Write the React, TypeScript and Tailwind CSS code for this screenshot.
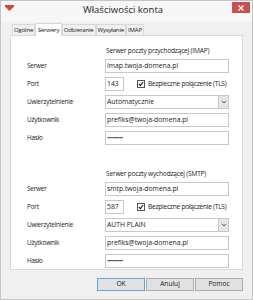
import React from "react";

const font = { fontFamily: '"Open Sans", "Noto Sans", sans-serif' };

function TextBox({ value, width = "w-[124px]" }: { value: string; width?: string }) {
  return (
    <div
      className={`${width} h-[14px] border border-[#c8c8c8] bg-white flex items-center px-[1px] text-[6.8px] leading-none text-[#1a1a1a] whitespace-nowrap`}
    >
      {value}
    </div>
  );
}

function Password() {
  return (
    <div className="w-[124px] h-[14px] border border-[#c8c8c8] bg-white flex items-center px-[1px] overflow-hidden">
      <span className="text-[6px] leading-none tracking-[-0.7px] text-[#222]">••••••••••</span>
    </div>
  );
}

function Select({ value }: { value: string }) {
  return (
    <div className="w-[124px] h-[14px] border border-[#c8c8c8] bg-white flex items-stretch text-[6.8px] leading-none text-[#1a1a1a]">
      <div className="flex-1 flex items-center px-[1px]">{value}</div>
      <div className="w-[10px] bg-[#e6e6e6] border-l border-[#c8c8c8] flex items-center justify-center">
        <svg width="6" height="4" viewBox="0 0 6 4">
          <path d="M0.8 0.8 L3 3 L5.2 0.8" fill="none" stroke="#555" strokeWidth="1" />
        </svg>
      </div>
    </div>
  );
}

function Row({ label, children }: { label: string; children: React.ReactNode }) {
  return (
    <div className="grid grid-cols-[78px_124px] items-center h-[14px]">
      <span className="text-[6.4px] tracking-[-0.2px] leading-none text-[#1a1a1a] whitespace-nowrap">{label}</span>
      {children}
    </div>
  );
}

function PortRow({ port }: { port: string }) {
  return (
    <Row label="Port">
      <div className="flex items-center">
        <TextBox value={port} width="w-[19px]" />
        <div className="ml-[13px] w-[8px] h-[8px] border border-[#555] bg-white flex items-center justify-center">
          <svg width="6" height="6" viewBox="0 0 6 6">
            <path d="M0.8 3 L2.4 4.6 L5.2 1" fill="none" stroke="#222" strokeWidth="1.1" />
          </svg>
        </div>
        <span className="ml-[3px] text-[6.6px] tracking-[-0.25px] leading-none text-[#1a1a1a] whitespace-nowrap">
          Bezpieczne połączenie (TLS)
        </span>
      </div>
    </Row>
  );
}

function Section({
  title,
  server,
  port,
  auth,
}: {
  title: string;
  server: string;
  port: string;
  auth: string;
}) {
  return (
    <div className="flex flex-col">
      <div className="h-[12px] pl-[79px] text-[6.6px] tracking-[-0.2px] leading-[12px] text-[#1a1a1a] whitespace-nowrap">
        {title}
      </div>
      <div className="flex flex-col gap-[4px] mt-[2px]">
        <Row label="Serwer">
          <TextBox value={server} />
        </Row>
        <PortRow port={port} />
        <Row label="Uwierzytelnienie">
          <Select value={auth} />
        </Row>
        <Row label="Użytkownik">
          <TextBox value="prefiks@twoja-domena.pl" />
        </Row>
        <Row label="Hasło">
          <Password />
        </Row>
      </div>
    </div>
  );
}

export default function App() {
  const tabs = ["Ogólne", "Serwery", "Odbieranie", "Wysyłanie", "IMAP"];

  return (
    <div style={font} className="w-[253px] h-[300px] bg-[#f0f0f0] border border-[#c4c4c4] flex flex-col overflow-hidden">
      {/* title bar */}
      <div className="h-[21px] bg-[#f7f7f7] flex items-start">
        <div className="pl-[4px] pt-[4px]">
          <svg width="9" height="6" viewBox="0 0 9 6">
            <path d="M0 0 H9 V1.5 L4.5 6 L0 1.5 Z" fill="#d9413b" />
          </svg>
        </div>
        <div className="flex-1 text-center text-[9.5px] leading-[17px] text-[#222]">Właściwości konta</div>
        <div className="mr-[2px] mt-[1px] w-[18px] h-[11px] bg-[#c75050] flex items-center justify-center">
          <svg width="6" height="6" viewBox="0 0 6 6">
            <path d="M0.5 0.5 L5.5 5.5 M5.5 0.5 L0.5 5.5" stroke="#fff" strokeWidth="1.2" />
          </svg>
        </div>
      </div>

      {/* tabs */}
      <div className="ml-[10px] mr-[9px] mt-[1px] flex items-end h-[12px] relative z-10">
        <div className="ml-[1px] flex items-end">
          {tabs.map((t) => {
            const active = t === "Serwery";
            return (
              <div
                key={t}
                className={
                  active
                    ? "h-[13px] -mb-[1px] px-[1.5px] bg-white border border-b-0 border-[#d9d9d9] text-[6.1px] tracking-[-0.2px] leading-[12px] text-[#1a1a1a] whitespace-nowrap"
                    : "h-[11px] px-[1px] bg-[#f0f0f0] border border-b-0 border-[#d9d9d9] text-[6.1px] tracking-[-0.2px] leading-[10px] text-[#1a1a1a] whitespace-nowrap"
                }
              >
                {t}
              </div>
            );
          })}
        </div>
      </div>

      {/* panel */}
      <div className="ml-[9px] mr-[9px] h-[235px] bg-white border border-[#d9d9d9] pl-[16px] pt-[9px] flex flex-col">
        <Section
          title="Serwer poczty przychodzącej (IMAP)"
          server="imap.twoja-domena.pl"
          port="143"
          auth="Automatycznie"
        />
        <div className="h-[23px]" />
        <Section
          title="Serwer poczty wychodzącej (SMTP)"
          server="smtp.twoja-domena.pl"
          port="587"
          auth="AUTH PLAIN"
        />
      </div>

      {/* buttons */}
      <div className="mt-[8px] mr-[9px] flex justify-end gap-[1px]">
        <button className="w-[48px] h-[13px] bg-[#e1e1e1] border border-[#5ea6e6] text-[6.6px] leading-none text-[#1a1a1a]">
          OK
        </button>
        <button className="w-[48px] h-[13px] bg-[#e1e1e1] border border-[#adadad] text-[6.6px] leading-none text-[#1a1a1a]">
          Anuluj
        </button>
        <button className="w-[48px] h-[13px] bg-[#e1e1e1] border border-[#adadad] text-[6.6px] leading-none text-[#1a1a1a]">
          Pomoc
        </button>
      </div>
    </div>
  );
}
